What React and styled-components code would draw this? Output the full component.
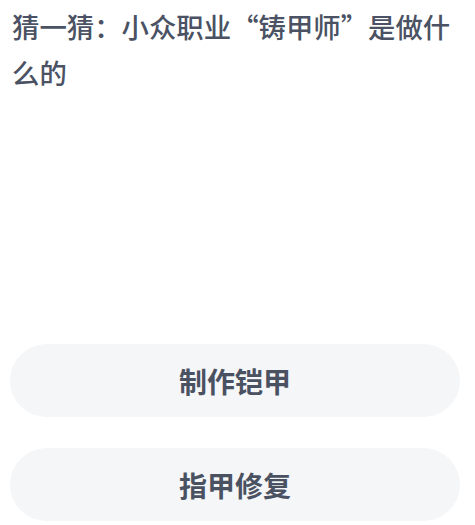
import React from 'react';
import styled, { createGlobalStyle } from 'styled-components';

const GlobalStyle = createGlobalStyle`
  html, body {
    margin: 0;
    padding: 0;
    background: #ffffff;
  }
  body {
    font-family: "Noto Sans CJK SC", "Noto Sans", sans-serif;
  }
`;

// Whole page: question on top, answers pushed to the bottom
const Page = styled.div`
  display: flex;
  flex-direction: column;
  height: 525px;
  box-sizing: border-box;
  padding: 3px 15px 4px 12px;
`;

const Question = styled.h1`
  margin: 0;
  font-size: 27.4px;
  line-height: 46px;
  font-weight: 500;
  color: #4a5263;
  letter-spacing: 0;
`;

const Answers = styled.div`
  margin-top: auto;
  display: flex;
  flex-direction: column;
  gap: 31px;
  margin-left: -2px;
`;

const AnswerButton = styled.button`
  height: 73px;
  width: 100%;
  border: none;
  border-radius: 37px;
  background: #f5f6f8;
  color: #4a5262;
  font-family: "Noto Sans CJK SC", "Noto Sans", sans-serif;
  font-size: 28px;
  font-weight: 700;
  cursor: pointer;
`;

const answers = ['制作铠甲', '指甲修复'];

export default function App() {
  return (
    <>
      <GlobalStyle />
      <Page>
        <Question>猜一猜：小众职业“铸甲师”是做什么的</Question>
        <Answers>
          {answers.map((a) => (
            <AnswerButton key={a}>{a}</AnswerButton>
          ))}
        </Answers>
      </Page>
    </>
  );
}
